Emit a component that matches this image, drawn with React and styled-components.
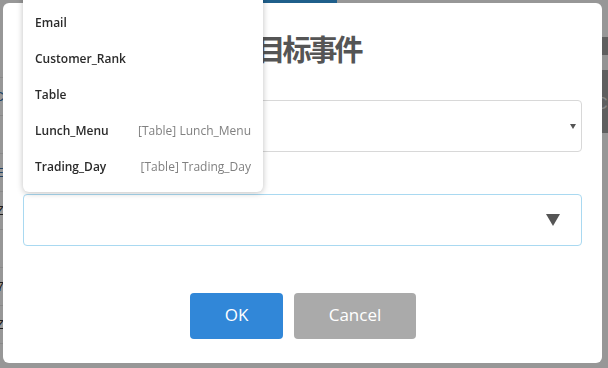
import React from "react";
import styled, { createGlobalStyle } from "styled-components";

const Global = createGlobalStyle`
  html, body { margin: 0; padding: 0; }
  body {
    width: 608px;
    height: 368px;
    overflow: hidden;
    background: #ffffff;
    font-family: "Open Sans", "Noto Sans", Arial, sans-serif;
  }
`;

/* ---------- page behind the overlay ---------- */
const Page = styled.div`
  position: relative;
  width: 608px;
  height: 368px;
  background: #fcfcfc;
  overflow: hidden;
`;

const TopTab = styled.div`
  position: absolute;
  left: 250px;
  top: 0;
  width: 87px;
  height: 8px;
  background: #349ee8;
`;

const SideList = styled.div`
  position: absolute;
  left: -40px;
  top: 40px;
  width: 44px;
  display: flex;
  flex-direction: column;
`;

const SideRow = styled.div`
  height: 37px;
  border-bottom: 1px solid #e4e4e4;
  font-size: 13px;
  line-height: 37px;
  text-align: right;
  color: ${(p) => p.$c || "#3a6fa3"};
  font-family: "Liberation Sans", Arial, sans-serif;
`;

const RightPanel = styled.div`
  position: absolute;
  right: 0;
  top: 37px;
  width: 12px;
  height: 96px;
  background: #9e9e9e;
  display: flex;
  flex-direction: column;
`;

const RightLight = styled.div`
  margin-top: 18px;
  height: 15px;
  background: #f6f6f6;
`;

const RightGlyph = styled.div`
  margin-top: 26px;
  color: #e0e0e0;
  font-size: 16px;
  line-height: 16px;
  font-family: "Liberation Sans", Arial, sans-serif;
`;

const Overlay = styled.div`
  position: fixed;
  inset: 0;
  background: rgba(0, 0, 0, 0.4);
`;

/* ---------- modal ---------- */
const Modal = styled.div`
  position: absolute;
  left: 3px;
  top: 3px;
  width: 599px;
  height: 360px;
  box-sizing: border-box;
  background: #fff;
  border-radius: 6px;
  padding: 0 20px 24px;
  display: flex;
  flex-direction: column;
`;

const Title = styled.h2`
  margin: 26px 0 0;
  padding-right: 40px;
  height: 38px;
  display: flex;
  justify-content: center;
  align-items: center;
  font-family: "Noto Sans CJK SC", "Noto Sans", sans-serif;
  font-size: 29px;
  font-weight: 700;
  color: #555;
  letter-spacing: -3px;
`;

const SelectBox = styled.div`
  height: 52px;
  box-sizing: border-box;
  border: 1px solid ${(p) => (p.$focus ? "#a9d9f1" : "#d8d8d8")};
  border-radius: 4px;
  display: flex;
  align-items: center;
  justify-content: flex-end;
  padding-right: ${(p) => (p.$big ? "21px" : "5px")};
  background: #fff;
`;

const FirstSelect = styled(SelectBox)`
  margin-top: 33px;
`;

const FieldGap = styled.div`
  height: 42px;
`;

const Buttons = styled.div`
  margin-top: auto;
  display: flex;
  justify-content: center;
  gap: 11px;
  padding-left: 1px;
`;

const Button = styled.button`
  width: ${(p) => p.$w}px;
  height: 46px;
  border: none;
  border-radius: 4px;
  background: ${(p) => p.$bg};
  color: #fff;
  font-family: "Open Sans", "Noto Sans", Arial, sans-serif;
  font-size: 17px;
  padding: 0 0 3px;
`;

/* ---------- dropdown menu ---------- */
const Menu = styled.div`
  position: absolute;
  left: 20px;
  top: -11px;
  width: 240px;
  box-sizing: border-box;
  background: #fff;
  border-radius: 0 0 6px 6px;
  box-shadow: 0 1px 6px rgba(0, 0, 0, 0.25);
  padding: 12px 0 8px;
  display: flex;
  flex-direction: column;
`;

const MenuItem = styled.div`
  height: 36px;
  display: flex;
  align-items: center;
  justify-content: space-between;
  padding: 0 12px;
  font-size: 12px;
`;

const ItemName = styled.span`
  font-weight: 600;
  color: #2b2b2b;
`;

const ItemDesc = styled.span`
  color: #808080;
`;

const Triangle = ({ w, h }) => (
  <svg width={w} height={h} viewBox={`0 0 ${w} ${h}`}>
    <polygon points={`0,0 ${w},0 ${w / 2},${h}`} fill="#555" />
  </svg>
);

const items = [
  { name: "Email" },
  { name: "Customer_Rank" },
  { name: "Table" },
  { name: "Lunch_Menu", desc: "[Table] Lunch_Menu" },
  { name: "Trading_Day", desc: "[Table] Trading_Day" },
];

export default function App() {
  return (
    <>
      <Global />
      <Page>
        <TopTab />
        <SideList>
          <SideRow />
          <SideRow $c="#2f6ca8">C</SideRow>
          <SideRow />
          <SideRow $c="#3a6fa3">E</SideRow>
          <SideRow $c="#333">Z</SideRow>
          <SideRow />
          <SideRow $c="#333">7</SideRow>
          <SideRow $c="#333">Z</SideRow>
        </SideList>
        <RightPanel>
          <RightLight />
          <RightGlyph>C</RightGlyph>
        </RightPanel>
        <Overlay />
        <Modal>
          <Title>选择目标事件</Title>
          <FirstSelect>
            <Triangle w={6} h={5} />
          </FirstSelect>
          <FieldGap />
          <SelectBox $focus $big>
            <Triangle w={14} h={12} />
          </SelectBox>
          <Buttons>
            <Button $w={93} $bg="#3187d8">OK</Button>
            <Button $w={122} $bg="#aaaaaa">Cancel</Button>
          </Buttons>
          <Menu>
            {items.map((it, i) => (
              <MenuItem key={i}>
                <ItemName>{it.name}</ItemName>
                {it.desc && <ItemDesc>{it.desc}</ItemDesc>}
              </MenuItem>
            ))}
          </Menu>
        </Modal>
      </Page>
    </>
  );
}
